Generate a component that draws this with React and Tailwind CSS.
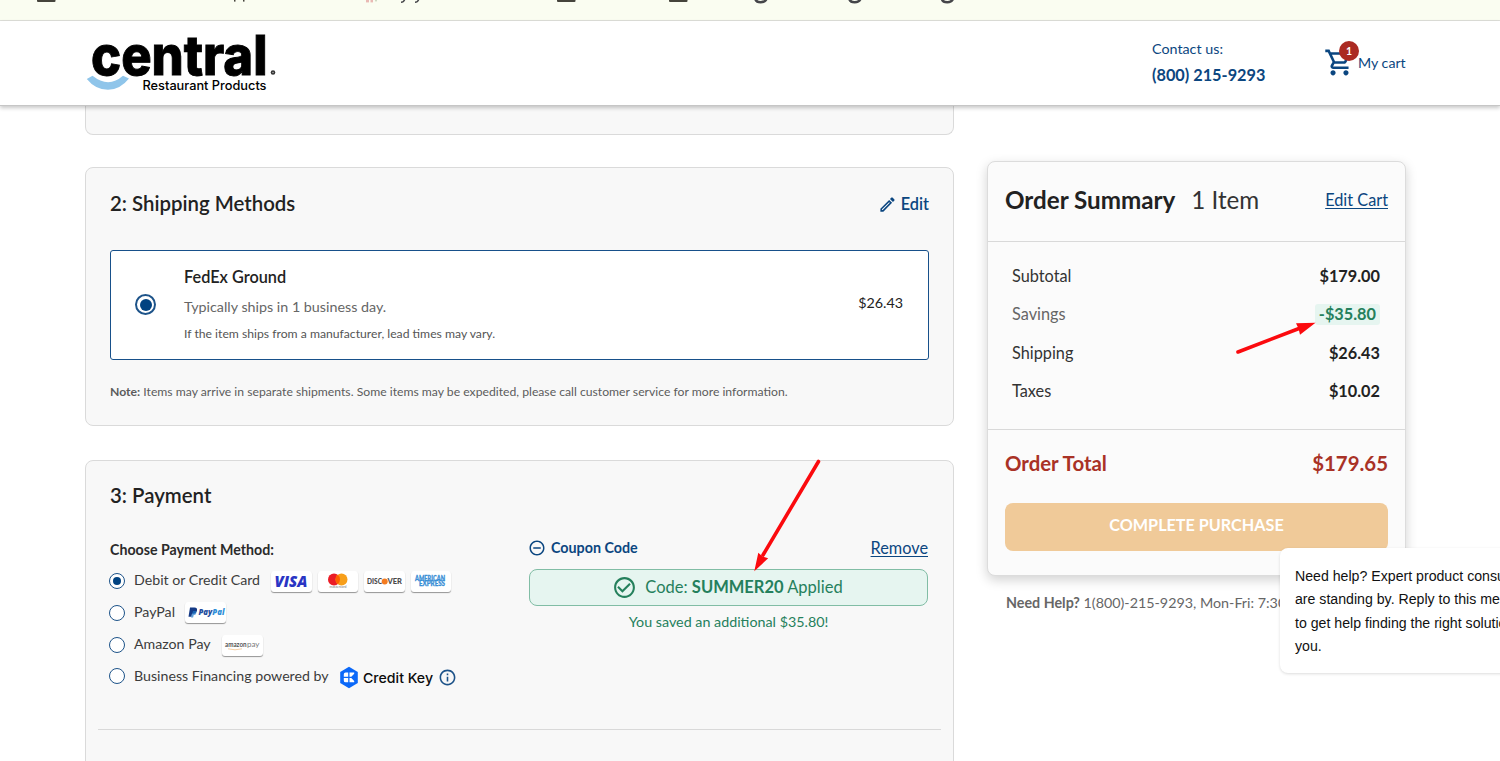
import React from "react";
import {
  MdOutlineShoppingCart,
  MdOutlineEdit,
  MdRemoveCircleOutline,
  MdCheckCircleOutline,
  MdOutlineInfo,
} from "react-icons/md";

function BrowserStrip() {
  return (
    <div className="h-[21px] shrink-0 border-b border-[#dfe0da] bg-[#fafdf1]">
      <svg className="block" width="1500" height="20" viewBox="0 0 1500 20">
        <g fill="#45443c">
          <rect x="37" y="-3" width="18.5" height="5" rx="1" />
          <rect x="557" y="-3" width="18.5" height="5" rx="1" />
          <rect x="669" y="-3" width="18.5" height="5" rx="1" />
          <rect x="234" y="0" width="1.5" height="1.6" />
          <rect x="243" y="0" width="1.5" height="1.6" />
        </g>
        <g fill="#e9b9b4">
          <rect x="366" y="0" width="3" height="2.4" />
          <rect x="370.5" y="0" width="2.5" height="2.4" />
          <rect x="375" y="0" width="2" height="1.4" fill="#cfd9c4" />
        </g>
        <g fill="none" stroke="#45464a">
          <path d="M401 2.3q2.6 0 3.6-2.6M415 2.3q2.6 0 3.6-2.6" strokeWidth="1.5" />
          <path d="M755.5-.5q1 2.7 5.2 2.7t5.5-2.7M849.5-.5q1 2.7 5.2 2.7t5.5-2.7M942-.5q1 2.7 5.2 2.7t5.5-2.7" strokeWidth="2.6" />
        </g>
      </svg>
    </div>
  );
}

function Logo() {
  return (
    <svg width="192" height="62" viewBox="86 31 192 62" className="block overflow-visible">
      <path d="M86.8 79L92.5 75.8Q108.500 88.500 123 75.800L129 78.500Q120 89.800 108 89.800Q95.500 89.800 86.800 79Z" fill="#8fc5ea" />
      <text x="91" y="74.700" fontFamily="Inter, sans-serif" fontWeight="800" fontSize="54.500" textLength="176.500" lengthAdjust="spacingAndGlyphs" fill="#000" stroke="#000" strokeWidth="0.900">central</text>
      <text x="142.500" y="90" fontFamily="Inter, sans-serif" fontWeight="500" fontSize="12.800" textLength="124" lengthAdjust="spacingAndGlyphs" fill="#000">Restaurant Products</text>
      <circle cx="273" cy="72.500" r="2.300" fill="#333" />
      <circle cx="273" cy="72.500" r="0.800" fill="#aaa" />
    </svg>
  );
}

function Header() {
  return (
    <header className="relative z-10 flex h-[85px] shrink-0 border-b border-[#c6c6c6] bg-white pl-[86px] shadow-[0_2px_4px_rgba(0,0,0,0.22)]">
      <div className="w-[1066px] pt-[10px]">
        <Logo />
      </div>
      <div className="flex w-[172px] flex-col pt-[18px] text-[#0b4680]">
        <div className="flex h-5 items-center text-[14.3px] leading-none">Contact us:</div>
        <div className="mt-[6px] flex h-5 items-center text-[16.3px] leading-none font-bold">(800) 215-9293</div>
      </div>
      <div className="relative flex h-[84px] items-center text-[#0b4680]">
        <MdOutlineShoppingCart size={31} className="-mt-[2px]" />
        <span className="absolute top-[20px] left-[15px] flex size-5 items-center justify-center rounded-full bg-[#ab2a22] text-[10.5px] leading-none font-bold text-white">1</span>
        <span className="ml-[3px] text-[14.2px] leading-none">My cart</span>
      </div>
    </header>
  );
}

function Radio({ checked, large }) {
  if (large) {
    return (
      <span className="flex size-[21px] items-center justify-center rounded-full border-2 border-[#1d5389] bg-white">
        <span className="size-[12px] rounded-full bg-[#004281]" />
      </span>
    );
  }
  return (
    <span className="flex size-4 shrink-0 items-center justify-center rounded-full border-[1.5px] border-[#1d5389] bg-white">
      {checked && <span className="size-[8px] rounded-full bg-[#004281]" />}
    </span>
  );
}

function Shipping() {
  return (
    <section className="mt-8 h-[259px] shrink-0 rounded-lg border border-[#dadada] bg-[#f8f8f8] px-6 pt-[23px]">
      <div className="flex h-6 items-center justify-between">
        <h2 className="text-[20.4px] leading-none font-semibold text-[#222]">2: Shipping Methods</h2>
        <div className="flex items-center gap-1 pt-[3px] text-[#0b4680]">
          <MdOutlineEdit size={19} />
          <span className="text-[16.3px] leading-none font-semibold">Edit</span>
        </div>
      </div>
      <div className="mt-[35px] flex h-[110px] rounded-[3px] border-[1.5px] border-[#17508a] bg-white">
        <div className="flex w-[73px] items-center pb-px pl-6">
          <Radio large />
        </div>
        <div className="flex grow flex-col pt-[16px]">
          <div className="flex h-5 items-center text-[16.3px] leading-none font-semibold text-[#222]">FedEx Ground</div>
          <div className="mt-[10px] flex h-5 items-center text-[14.3px] leading-none text-[#666]">Typically ships in 1 business day.</div>
          <div className="mt-[7px] flex h-5 items-center text-[12.2px] leading-none text-[#555]">If the item ships from a manufacturer, lead times may vary.</div>
        </div>
        <div className="flex items-center pr-[25px] pb-[3px] text-[14.3px] leading-none text-[#222]">$26.43</div>
      </div>
      <p className="mt-[25px] text-[12.2px] leading-[14px] text-[#5c5c5c]">
        <b>Note:</b> Items may arrive in separate shipments. Some items may be expedited, please call customer service for more information.
      </p>
    </section>
  );
}

function Tile({ children }) {
  return (
    <span className="flex h-[21px] w-[40.5px] items-center justify-center rounded-[3px] bg-white shadow-[0_1px_1px_rgba(0,0,0,0.4)]">
      <svg width="39" height="19" viewBox="0 0 39 19" className="overflow-visible">{children}</svg>
    </span>
  );
}

function Visa() {
  return (
    <Tile>
      <text x="2.500" y="14.500" fontFamily="Open Sans, sans-serif" fontWeight="800" fontStyle="italic" fontSize="15" textLength="33" lengthAdjust="spacingAndGlyphs" fill="#2a35c4">VISA</text>
    </Tile>
  );
}

function Mastercard() {
  return (
    <Tile>
      <circle cx="16" cy="7.500" r="6" fill="#eb1c26" />
      <circle cx="23.500" cy="7.500" r="6" fill="#f79f1b" />
      <path d="M19.750 2.800a6 6 0 0 1 0 9.400a6 6 0 0 1 0-9.400" fill="#ff5f00" />
      <text x="11.500" y="16.300" fontFamily="Lato, sans-serif" fontSize="3.500" textLength="17" fill="#777">mastercard</text>
    </Tile>
  );
}

function Discover() {
  return (
    <Tile>
      <text x="2" y="12.300" fontFamily="Lato, sans-serif" fontWeight="900" fontSize="8" textLength="15" lengthAdjust="spacingAndGlyphs" fill="#4a4a4a">DISC</text>
      <circle cx="19.700" cy="9.500" r="3" fill="#f47b20" />
      <text x="22.500" y="12.300" fontFamily="Lato, sans-serif" fontWeight="900" fontSize="8" textLength="14.500" lengthAdjust="spacingAndGlyphs" fill="#4a4a4a">VER</text>
    </Tile>
  );
}

function Amex() {
  return (
    <Tile>
      <text x="4" y="9.300" fontFamily="Lato, sans-serif" fontWeight="900" fontSize="6.500" textLength="30" lengthAdjust="spacingAndGlyphs" fill="#3a8fd6" stroke="#3a8fd6" strokeWidth="0.300">AMERICAN</text>
      <text x="8" y="14.300" fontFamily="Lato, sans-serif" fontWeight="900" fontSize="6.500" textLength="26" lengthAdjust="spacingAndGlyphs" fill="#3a8fd6" stroke="#3a8fd6" strokeWidth="0.300">EXPRESS</text>
    </Tile>
  );
}

function PayPal() {
  return (
    <Tile>
      <path d="M4 4.500h4.500q3 0 2.500 3t-3.700 3.200H6l-.6 3.100H2.500z" fill="#153a86" />
      <path d="M7 8h3.200q.8 4-2.500 4.100l-.6 2.500H5z" fill="#1f78c8" opacity=".7" />
      <text x="12.500" y="12.300" fontFamily="Open Sans, sans-serif" fontWeight="800" fontStyle="italic" fontSize="8.500" textLength="26" lengthAdjust="spacingAndGlyphs" fill="#1f4e9e">Pay<tspan fill="#2f8fd8">Pal</tspan></text>
    </Tile>
  );
}

function AmazonPay() {
  return (
    <Tile>
      <text x="2" y="11" fontFamily="Lato, sans-serif" fontWeight="700" fontSize="7" textLength="21.500" lengthAdjust="spacingAndGlyphs" fill="#555">amazon</text>
      <text x="24" y="11" fontFamily="Lato, sans-serif" fontSize="7.500" textLength="12.500" lengthAdjust="spacingAndGlyphs" fill="#777">pay</text>
      <path d="M5 12.800q7 2 14 0" fill="none" stroke="#f3c898" strokeWidth="0.900" />
    </Tile>
  );
}

function CreditKey() {
  return (
    <svg width="96" height="24" viewBox="339 665 96 24">
      <path d="M349 666.800L357.800 672V683L349 688.200L340.200 683V672Z" fill="#0b68f8" />
      <path d="M348.200 672.600H345.600Q343.800 672.600 343.800 674.500V676.700H348.200ZM348.200 678H343.800V680.400Q343.800 682.300 345.600 682.300H348.200ZM349.500 672.600H354.200V673.800L351.300 676.700H349.500ZM349.500 678H351.300L354.200 681V682.300H349.500Z" fill="#fff" />
      <text x="363" y="682.500" fontFamily="Inter, sans-serif" fontWeight="500" fontSize="13.500" textLength="70" lengthAdjust="spacingAndGlyphs" fill="#0c0c0c">Credit Key</text>
    </svg>
  );
}

function Payment() {
  return (
    <section className="mt-[34px] h-[340px] shrink-0 rounded-t-lg border border-[#dadada] bg-[#f8f8f8] px-3 pt-[22px]">
      <h2 className="flex h-6 items-center px-3 text-[20.4px] leading-none font-semibold text-[#222]">3: Payment</h2>
      <div className="mt-[31px] flex h-[192px] border-b border-[#d9d9d9] px-3">
        <div className="flex w-[419px] flex-col text-[14.200px] leading-none text-[#3c3c3c]">
          <div className="mb-[3px] flex h-6 items-center font-bold text-[#2b2b2b]">Choose Payment Method:</div>
          <div className="-ml-px flex h-8 items-center gap-2 pb-px">
            <Radio checked />
            <span className="w-[130px] pl-px">Debit or Credit Card</span>
            <span className="flex gap-[6px] pt-px">
              <Visa />
              <Mastercard />
              <Discover />
              <Amex />
            </span>
          </div>
          <div className="-ml-px flex h-8 items-center gap-2 pb-px">
            <Radio />
            <span className="w-[44px] pl-px">PayPal</span>
            <PayPal />
          </div>
          <div className="-ml-px flex h-8 items-center gap-2 pb-px">
            <Radio />
            <span className="w-[81px] pl-px">Amazon Pay</span>
            <span className="pt-px">
              <AmazonPay />
            </span>
          </div>
          <div className="-ml-px flex h-8 items-center gap-2 pb-[2px]">
            <Radio />
            <span className="w-[198px] pl-px whitespace-nowrap">Business Financing powered by</span>
            <span className="flex items-center gap-[3px] pt-[2px]">
              <CreditKey />
              <MdOutlineInfo size={19} className="text-[#1d5389]" />
            </span>
          </div>
        </div>
        <div className="flex w-[399px] flex-col leading-none">
          <div className="-mt-px flex h-[22px] items-center justify-between text-[#0b4680]">
            <div className="flex items-center gap-[5px]">
              <MdRemoveCircleOutline size={18} className="-ml-px" />
              <span className="text-[14.300px] font-bold">Coupon Code</span>
            </div>
            <span className="text-[16.300px] underline underline-offset-2">Remove</span>
          </div>
          <div className="mt-[10px] flex h-[37px] items-center justify-center gap-[8px] rounded-lg border border-[#81bda5] bg-[#e6f5f0] pr-[2px] text-[16.500px] text-[#25805c]">
            <MdCheckCircleOutline size={25} />
            <span>
              Code: <b>SUMMER20</b> Applied
            </span>
          </div>
          <div className="mt-[6px] flex h-5 items-center justify-center text-[14.300px] text-[#25805c]">You saved an additional $35.80!</div>
        </div>
      </div>
    </section>
  );
}

function SummaryRow({ label, value }) {
  return (
    <div className="flex h-[38px] items-center justify-between">
      <span className="text-[#333]">{label}</span>
      <span className="font-bold text-[#222]">{value}</span>
    </div>
  );
}

function OrderSummary() {
  return (
    <aside className="ml-[33px] flex w-[419px] flex-col pt-[55px] leading-none">
      <div className="h-[415px] rounded-lg border border-[#dcdcdc] bg-[#fbfbfb] shadow-[0_4px_12px_rgba(0,0,0,0.18)]">
        <div className="flex h-[80px] items-center border-b border-[#d9d9d9] px-[17px] pb-[2px]">
          <h2 className="text-[24.200px] font-bold text-[#222]">Order Summary</h2>
          <span className="ml-4 grow text-[24.200px] text-[#333]">1 Item</span>
          <span className="text-[16.300px] text-[#0b4680] underline underline-offset-2">Edit Cart</span>
        </div>
        <div className="h-[188px] border-b border-[#d9d9d9] px-[25px] pt-[15px] pl-[24px] text-[16.300px]">
          <SummaryRow label="Subtotal" value="$179.00" />
          <div className="flex h-[39px] items-center justify-between">
            <span className="text-[#666]">Savings</span>
            <span className="flex h-[21px] items-center rounded-[3px] bg-[#e6f5f0] px-1 font-bold text-[#25805c]">-$35.80</span>
          </div>
          <SummaryRow label="Shipping" value="$26.43" />
          <SummaryRow label="Taxes" value="$10.02" />
        </div>
        <div className="flex h-[73px] items-center justify-between px-[17px] pb-[6px] text-[20.400px] font-bold text-[#a93226]">
          <span>Order Total</span>
          <span>$179.65</span>
        </div>
        <div className="mx-[17px] flex h-[48px] items-center justify-center rounded-lg bg-[#f0ca99] pb-1 text-[16.200px] font-bold text-white">COMPLETE PURCHASE</div>
      </div>
      <p className="mt-[19px] ml-[19px] text-[14.300px] leading-[16px] whitespace-nowrap text-[#666]">
        <b>Need Help?</b> 1(800)-215-9293, Mon-Fri: 7:30am
      </p>
    </aside>
  );
}

function ChatBubble() {
  return (
    <div className="absolute top-[548px] left-[1280px] z-20 h-[125px] w-[300px] rounded-lg bg-white pt-[17px] pl-[15px] font-['Liberation_Sans',sans-serif] text-[14.150px] leading-[23.300px] whitespace-nowrap text-[#111] shadow-[0_1px_3px_rgba(0,0,0,0.14)]">
      <div>Need help? Expert product consultants</div>
      <div>are standing by. Reply to this message</div>
      <div>to get help finding the right solution for</div>
      <div>you.</div>
    </div>
  );
}

function Arrows() {
  return (
    <svg className="pointer-events-none absolute inset-0 z-30" width="1500" height="761" viewBox="0 0 1500 761">
      <g stroke="#fb0a0e" strokeWidth="3.600" strokeLinecap="round" fill="#fb0a0e">
        <path d="M818.500 461.500L763 555" />
        <path d="M754.300 571.300L758.300 552.700L762.500 556.500L768.200 558.300Z" stroke="none" />
        <path d="M1238 352L1299 328.500" />
        <path d="M1315.500 322.700L1296 323.300L1298.500 328.500L1300 334.700Z" stroke="none" />
      </g>
    </svg>
  );
}

export default function App() {
  return (
    <div className="relative flex h-[761px] w-[1500px] flex-col overflow-hidden bg-white font-['Lato',sans-serif]">
      <BrowserStrip />
      <Header />
      <main className="flex h-[655px] pl-[85px]">
        <div className="flex w-[869px] flex-col">
          <section className="h-[29px] shrink-0 rounded-b-lg border border-t-0 border-[#dadada] bg-[#f8f8f8]" />
          <Shipping />
          <Payment />
        </div>
        <OrderSummary />
      </main>
      <ChatBubble />
      <Arrows />
    </div>
  );
}
